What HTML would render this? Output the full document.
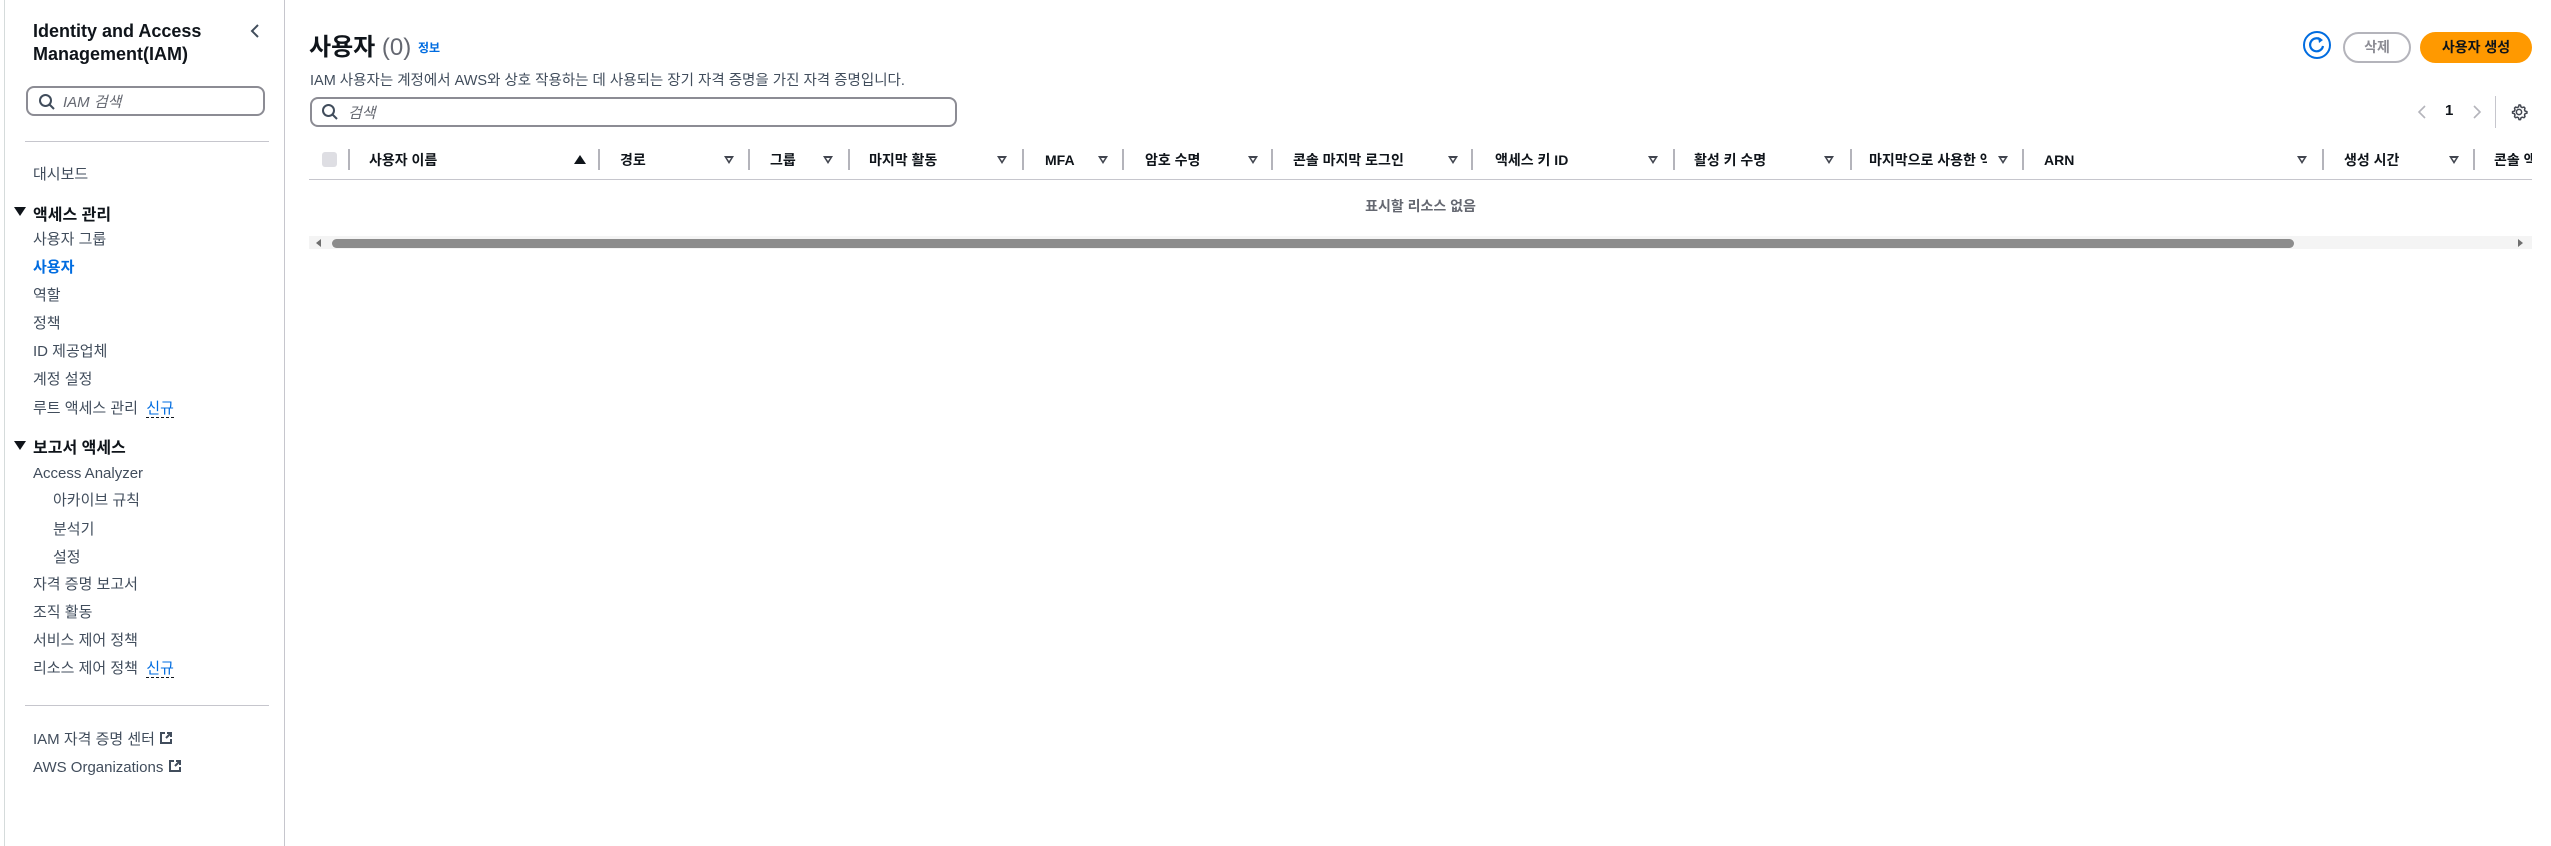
<!DOCTYPE html>
<html><head><meta charset="utf-8"><style>
*{margin:0;padding:0;box-sizing:border-box}
body{width:2551px;height:846px;background:#fff;position:relative;overflow:hidden;font-family:"Liberation Sans","Noto Sans CJK KR",sans-serif;color:#0f141a}
.a{position:absolute;white-space:nowrap}
.side{position:absolute;left:4px;top:0;width:281px;height:846px;border-left:1px solid #d5dbdb;border-right:1px solid #c6c6cd;background:#fff}
.nav{font-size:15px;color:#414d5c;line-height:20px}
.nb{font-size:16px;font-weight:bold;color:#0f141a}
.new{color:#006ce0;border-bottom:1px dashed #0f141a;font-size:15px}
.tri{width:0;height:0;border-left:6px solid transparent;border-right:6px solid transparent;border-top:9px solid #0f141a}
.h{font-size:14px;font-weight:bold;color:#0f141a;top:150px;line-height:20px}
.sep{position:absolute;top:149px;width:2px;height:21px;background:#b4b4bb}
.dn{position:absolute;top:156px;width:0;height:0;border-left:5px solid transparent;border-right:5px solid transparent;border-top:8px solid #424650}
.dn::after{content:"";position:absolute;left:-2px;top:-6px;border-left:2px solid transparent;border-right:2px solid transparent;border-top:3px solid #fff}
</style></head><body>
<div class="side">
<div class="a" style="left:28px;top:20px;font-size:18px;font-weight:bold;line-height:23px">Identity and Access<br>Management(IAM)</div>
<svg class="a" style="left:244px;top:23px" width="12" height="16"><path d="M9 2 L3 8 L9 14" stroke="#414d5c" stroke-width="2" fill="none"/></svg>
<div class="a" style="left:21px;top:86px;width:239px;height:30px;border:2px solid #8c8c94;border-radius:8px"></div>
<svg class="a" style="left:33px;top:93px" width="18" height="18"><circle cx="7.5" cy="7.5" r="5.5" stroke="#414d5c" stroke-width="2" fill="none"/><path d="M11.5 11.5 L16 16" stroke="#414d5c" stroke-width="2"/></svg>
<div class="a" style="left:58px;top:91px;font-size:15px;font-style:italic;color:#656871">IAM 검색</div>
<div class="a" style="left:20px;top:141px;width:244px;height:1px;background:#c6c6cd"></div>
<div class="a nav" style="left:28px;top:165px">대시보드</div>
<div class="a tri" style="left:9px;top:207px"></div>
<div class="a nb" style="left:28px;top:201px">액세스 관리</div>
<div class="a nav" style="left:28px;top:230px">사용자 그룹</div>
<div class="a nav" style="left:28px;top:258px;color:#006ce0;font-weight:bold">사용자</div>
<div class="a nav" style="left:28px;top:286px">역할</div>
<div class="a nav" style="left:28px;top:314px">정책</div>
<div class="a nav" style="left:28px;top:342px">ID 제공업체</div>
<div class="a nav" style="left:28px;top:370px">계정 설정</div>
<div class="a nav" style="left:28px;top:399px">루트 액세스 관리 &nbsp;<span class="new">신규</span></div>
<div class="a tri" style="left:9px;top:441px"></div>
<div class="a nb" style="left:28px;top:434px">보고서 액세스</div>
<div class="a nav" style="left:28px;top:464px">Access Analyzer</div>
<div class="a nav" style="left:48px;top:491px">아카이브 규칙</div>
<div class="a nav" style="left:48px;top:520px">분석기</div>
<div class="a nav" style="left:48px;top:548px">설정</div>
<div class="a nav" style="left:28px;top:575px">자격 증명 보고서</div>
<div class="a nav" style="left:28px;top:603px">조직 활동</div>
<div class="a nav" style="left:28px;top:631px">서비스 제어 정책</div>
<div class="a nav" style="left:28px;top:659px">리소스 제어 정책 &nbsp;<span class="new">신규</span></div>
<div class="a" style="left:20px;top:705px;width:244px;height:1px;background:#c6c6cd"></div>
<div class="a nav" style="left:28px;top:730px">IAM 자격 증명 센터 <svg width="14" height="14" style="vertical-align:-1px"><path d="M6 2H2V12H12V8" stroke="#414d5c" stroke-width="2" fill="none"/><path d="M7 7L12 2M8 2H12V6" stroke="#414d5c" stroke-width="2" fill="none"/></svg></div>
<div class="a nav" style="left:28px;top:758px">AWS Organizations <svg width="14" height="14" style="vertical-align:-1px"><path d="M6 2H2V12H12V8" stroke="#414d5c" stroke-width="2" fill="none"/><path d="M7 7L12 2M8 2H12V6" stroke="#414d5c" stroke-width="2" fill="none"/></svg></div>
</div>

<div class="a" style="left:309px;top:32px;font-size:24px;font-weight:bold;line-height:32px">사용자 <span style="font-weight:normal;color:#656871">(0)</span> <span style="font-size:12px;color:#006ce0;vertical-align:3px">정보</span></div>
<div class="a" style="left:310px;top:69px;font-size:14.5px;color:#414d5c">IAM 사용자는 계정에서 AWS와 상호 작용하는 데 사용되는 장기 자격 증명을 가진 자격 증명입니다.</div>
<div class="a" style="left:310px;top:97px;width:647px;height:30px;border:2px solid #8c8c94;border-radius:8px"></div>
<svg class="a" style="left:321px;top:103px" width="18" height="18"><circle cx="7.5" cy="7.5" r="5.5" stroke="#414d5c" stroke-width="2" fill="none"/><path d="M11.5 11.5 L16 16" stroke="#414d5c" stroke-width="2"/></svg>
<div class="a" style="left:348px;top:102px;font-size:15px;font-style:italic;color:#656871">검색</div>

<svg class="a" style="left:2301px;top:31px" width="34" height="28"><circle cx="16" cy="14" r="13" stroke="#006ce0" stroke-width="2" fill="none"/><path d="M20 9 A6.5 6.5 0 1 0 22 15" stroke="#006ce0" stroke-width="2.2" fill="none"/><path d="M17 6 L22 9 L18 12Z" fill="#006ce0"/></svg>
<div class="a" style="left:2343px;top:32px;width:68px;height:31px;border:2px solid #b4b4bb;border-radius:16px;font-size:14px;font-weight:bold;color:#8c8c94;text-align:center;line-height:27px">삭제</div>
<div class="a" style="left:2420px;top:32px;width:112px;height:31px;background:#ff9900;border-radius:16px;font-size:14px;font-weight:bold;color:#0f141a;text-align:center;line-height:31px">사용자 생성</div>

<svg class="a" style="left:2416px;top:104px" width="12" height="16"><path d="M9 2 L3 8 L9 14" stroke="#b4b4bb" stroke-width="1.6" fill="none"/></svg>
<div class="a" style="left:2445px;top:102px;font-size:15px;font-weight:bold">1</div>
<svg class="a" style="left:2471px;top:104px" width="12" height="16"><path d="M3 2 L9 8 L3 14" stroke="#b4b4bb" stroke-width="1.6" fill="none"/></svg>
<div class="a" style="left:2495px;top:96px;width:1px;height:32px;background:#c6c6cd"></div>
<svg class="a" style="left:2510px;top:103px" width="18" height="18" viewBox="0 0 24 24"><path d="M12 2.5l2 .3.6 2.4 1.6.9 2.4-.7 1.4 1.4-.7 2.4.9 1.6 2.4.6v2.2l-2.4.6-.9 1.6.7 2.4-1.4 1.4-2.4-.7-1.6.9-.6 2.4h-2l-.6-2.4-1.6-.9-2.4.7-1.4-1.4.7-2.4-.9-1.6-2.4-.6v-2.2l2.4-.6.9-1.6-.7-2.4 1.4-1.4 2.4.7 1.6-.9.6-2.4z" stroke="#424650" stroke-width="2" fill="none" stroke-linejoin="round"/><circle cx="12" cy="12" r="3.5" stroke="#424650" stroke-width="2" fill="none"/></svg>

<div class="a" style="left:322px;top:152px;width:15px;height:15px;background:#dedee3;border-radius:3px"></div>
<div class="sep" style="left:348px"></div>
<div class="a h" style="left:369px">사용자 이름</div>
<div class="a" style="left:574px;top:155px;border-left:6px solid transparent;border-right:6px solid transparent;border-bottom:9px solid #0f141a"></div>
<div class="sep" style="left:598px"></div>
<div class="a h" style="left:620px">경로</div><div class="dn" style="left:724px"></div>
<div class="sep" style="left:748px"></div>
<div class="a h" style="left:770px">그룹</div><div class="dn" style="left:823px"></div>
<div class="sep" style="left:848px"></div>
<div class="a h" style="left:869px">마지막 활동</div><div class="dn" style="left:997px"></div>
<div class="sep" style="left:1022px"></div>
<div class="a h" style="left:1045px">MFA</div><div class="dn" style="left:1098px"></div>
<div class="sep" style="left:1122px"></div>
<div class="a h" style="left:1145px">암호 수명</div><div class="dn" style="left:1248px"></div>
<div class="sep" style="left:1271px"></div>
<div class="a h" style="left:1293px">콘솔 마지막 로그인</div><div class="dn" style="left:1448px"></div>
<div class="sep" style="left:1471px"></div>
<div class="a h" style="left:1495px">액세스 키 ID</div><div class="dn" style="left:1648px"></div>
<div class="sep" style="left:1673px"></div>
<div class="a h" style="left:1694px">활성 키 수명</div><div class="dn" style="left:1824px"></div>
<div class="sep" style="left:1850px"></div>
<div class="a h" style="left:1869px;width:118px;overflow:hidden">마지막으로 사용한 액</div><div class="dn" style="left:1998px"></div>
<div class="sep" style="left:2022px"></div>
<div class="a h" style="left:2044px">ARN</div><div class="dn" style="left:2297px"></div>
<div class="sep" style="left:2322px"></div>
<div class="a h" style="left:2344px">생성 시간</div><div class="dn" style="left:2449px"></div>
<div class="sep" style="left:2473px"></div>
<div class="a h" style="left:2494px;width:38px;overflow:hidden">콘솔 액</div>
<div class="a" style="left:309px;top:179px;width:2223px;height:1px;background:#c6c6cd"></div>
<div class="a" style="left:309px;top:196px;width:2223px;text-align:center;font-size:14px;font-weight:bold;color:#656871">표시할 리소스 없음</div>

<div class="a" style="left:309px;top:236px;width:2223px;height:13px;background:#f4f4f4"></div>
<div class="a" style="left:316px;top:239px;border-top:4px solid transparent;border-bottom:4px solid transparent;border-right:5px solid #6f6f6f"></div>
<div class="a" style="left:332px;top:239px;width:1962px;height:9px;background:#8c8c8c;border-radius:5px"></div>
<div class="a" style="left:2518px;top:239px;border-top:4px solid transparent;border-bottom:4px solid transparent;border-left:5px solid #6f6f6f"></div>
</body></html>
